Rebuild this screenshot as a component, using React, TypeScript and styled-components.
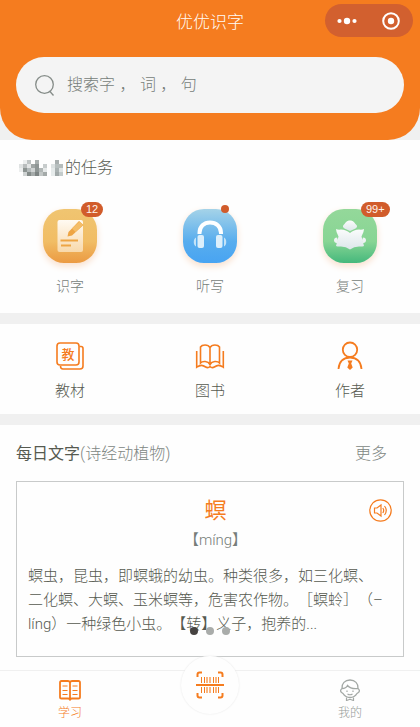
import React from "react";
import styled, { createGlobalStyle, css } from "styled-components";

const ORANGE = "#f57c1f";

const GlobalStyle = createGlobalStyle`
  * { box-sizing: border-box; }
  body {
    margin: 0;
    background: #fefefe;
    font-family: Roboto, "Noto Sans CJK SC", sans-serif;
    font-weight: 300;
    color: #565a50;
    text-spacing-trim: space-all;
  }
  button, input {
    font: inherit;
    color: inherit;
    border: 0;
    padding: 0;
    background: none;
  }
  button { cursor: pointer; }
  a { color: inherit; text-decoration: none; }
  h1, h2, p { margin: 0; font-weight: inherit; }
  svg { display: block; }
`;

const Page = styled.div`
  min-height: 100vh;
  display: flex;
  flex-direction: column;
`;

const HeaderBack = styled.div`
  background: #f0f0f0;
`;

const Header = styled.header`
  background: ${ORANGE};
  border-radius: 0 0 32px 32px;
  padding: 4px 16px 27px;
`;

const TitleBar = styled.div`
  display: grid;
  grid-template-columns: 1fr auto 1fr;
  align-items: center;
  height: 33px;
  margin-right: -9px;
  margin-left: -9px;
  margin-bottom: 20px;
`;

const Title = styled.h1`
  grid-column: 2;
  padding-top: 2px;
  font-size: 17px;
  line-height: 24px;
  color: #fffaf5;
`;

const Capsule = styled.div`
  justify-self: end;
  display: flex;
  width: 88px;
  height: 33px;
  border-radius: 17px;
  background: #d2602f;
`;

const CapsuleButton = styled.button`
  flex: 1;
  display: flex;
  align-items: center;
  justify-content: center;
`;

const SearchBox = styled.label`
  display: flex;
  align-items: center;
  gap: 11px;
  height: 56px;
  padding: 0 18px;
  border-radius: 28px;
  background: #f4f4f4;
`;

const SearchInput = styled.input`
  flex: 1;
  min-width: 0;
  font-family: "Liberation Sans", "Noto Sans CJK SC", sans-serif;
  font-size: 16px;
  line-height: 24px;
  outline: 0;
  &::placeholder { color: #767d79; opacity: 1; }
`;

const Section = styled.section<{ $divided?: boolean }>`
  background: #fefefe;
  ${(p) => p.$divided && css`border-bottom: 11px solid #f0f0f0;`}
`;

const TaskTitle = styled.h2`
  display: flex;
  align-items: center;
  gap: 1px;
  padding: 16px 18px 0;
  font-size: 16px;
  line-height: 24px;
`;

const Row = styled.div<{ $pad: string }>`
  display: grid;
  grid-template-columns: repeat(3, 1fr);
  padding: ${(p) => p.$pad};
`;

const Entry = styled.button<{ $size: number; $gap: number; $muted?: boolean }>`
  display: flex;
  flex-direction: column;
  align-items: center;
  gap: ${(p) => p.$gap}px;
  font-size: ${(p) => p.$size}px;
  line-height: 20px;
  color: ${(p) => (p.$muted ? "#767d79" : "#565a50")};
`;

const Tile = styled.span<{ $from: string; $mid: string; $to: string }>`
  position: relative;
  width: 54px;
  height: 54px;
  border-radius: 21px;
  background: linear-gradient(${(p) => `${p.$from}, ${p.$mid} 60%, ${p.$to}`});
  box-shadow: 0 3px 7px #f9dfcb;
`;

const Badge = styled.span`
  position: absolute;
  left: 38px;
  top: -7px;
  padding: 0 5px;
  border-radius: 8px;
  background: #d15c2b;
  color: #fff3ea;
  font-family: "Liberation Sans", sans-serif;
  font-size: 11px;
  line-height: 15px;
`;

const Dot = styled.span`
  position: absolute;
  left: 38px;
  top: -4px;
  width: 8px;
  height: 8px;
  border-radius: 50%;
  background: #d15c2b;
`;

const DailyHead = styled.div`
  display: flex;
  justify-content: space-between;
  padding: 17px 33px 0 16px;
  font-size: 16px;
  line-height: 24px;
`;

const DailyTitle = styled.h2`
  font-size: 16px;
  font-weight: 400;
`;

const Muted = styled.span`
  font-weight: 300;
  color: #808783;
`;

const More = styled.a`
  color: #808783;
`;

const Card = styled.article`
  position: relative;
  min-height: 176px;
  margin: 15px 16px 13px;
  padding: 14px 0 18px 11px;
  border: 1px solid #c8caca;
`;

const Character = styled.p`
  text-align: center;
  font-size: 22px;
  font-weight: 400;
  line-height: 30px;
  color: ${ORANGE};
`;

const Pinyin = styled.p`
  text-align: center;
  font-size: 15px;
  line-height: 28px;
  color: #767d79;
`;

const Meaning = styled.p`
  margin-top: 10px;
  padding-right: 18px;
  font-size: 15px;
  line-height: 24px;
`;

const SoundButton = styled.button`
  position: absolute;
  top: 17px;
  right: 11px;
`;

const Pager = styled.div`
  position: absolute;
  left: 0;
  right: 0;
  bottom: 21px;
  display: flex;
  justify-content: center;
  gap: 8px;
`;

const PageDot = styled.button<{ $on?: boolean }>`
  width: 8px;
  height: 8px;
  border-radius: 50%;
  background: ${(p) => (p.$on ? "#454240" : "#a9acaa")};
`;

const TabBar = styled.nav`
  display: grid;
  grid-template-columns: repeat(3, 1fr);
  flex: 1;
  min-height: 57px;
  border-top: 1px solid #f0f0f0;
`;

const Tab = styled.a<{ $on?: boolean }>`
  display: flex;
  flex-direction: column;
  align-items: center;
  gap: 3px;
  padding-top: 8px;
  font-size: 12px;
  line-height: 18px;
  color: ${(p) => (p.$on ? ORANGE : "#969c99")};
`;

const ScanButton = styled.button`
  position: relative;
  justify-self: center;
  display: flex;
  align-items: center;
  justify-content: center;
  width: 58px;
  height: 58px;
  margin-top: -15px;
  border-radius: 50%;
  background: #fefefe;
  box-shadow: 0 0 2px #e6e6e6;
`;

const mosaic: [number, number, string][] = [
  [0, 1, "#dfe2e2"], [1, 1, "#b9bdbd"], [2, 1, "#e3e5e5"], [1, 0, "#eceeee"], [2, 0, "#bfc4c4"], [3, 1, "#a0a6a5"],
  [0, 2, "#eceeee"], [1, 2, "#8d9492"], [2, 2, "#b4baba"], [3, 2, "#cfd3d3"], [1, 3, "#cfd3d3"], [2, 3, "#858c8a"],
  [3, 3, "#a5abaa"], [4, 0, "#a9afae"], [4, 1, "#8f9695"], [4, 2, "#8f9695"],
  [4, 3, "#7d8483"], [5, 2, "#b0b6b5"], [5, 3, "#c2c7c6"], [6, 1, "#c7cccc"], [6, 2, "#e6e9e9"],
  [6, 3, "#a4aaa9"], [8, 1, "#dce1e1"], [8, 2, "#e6ebeb"], [9, 0, "#a9afaf"], [9, 1, "#b6bebe"],
  [9, 2, "#aab2b2"], [9, 3, "#a1a9a9"], [10, 1, "#b5bcbb"], [10, 2, "#dfe4e4"], [10, 3, "#c4cccc"], [8, 3, "#e7ecec"],
];

const NameMosaic = () => (
  <svg width="46" height="17" viewBox="0 0 46 17" role="img" aria-label="用户" shapeRendering="crispEdges">
    {mosaic.map(([x, y, fill], i) => (
      <rect key={i} x={x * 4 + 1} y={y * 4} width="4" height="4" fill={fill} />
    ))}
  </svg>
);

const NoteIcon = () => (
  <svg width="54" height="54" viewBox="0 0 54 54">
    <defs>
      <linearGradient id="note" x2="0" y2="1">
        <stop stopColor="#fffaf2" />
        <stop offset="1" stopColor="#f8d9ab" />
      </linearGradient>
    </defs>
    <rect x="14.500" y="11" width="25.500" height="32" rx="2" fill="url(#note)" />
    <path d="M17.500 31.500H35M18 36.500H28" stroke="#eea544" strokeWidth="1.800" />
    <path d="M36 12l4.500 4-11.500 10.500-4.500 1 1-4.500z" fill="#eea544" />
    <path d="M36.500 12.500l3.500 3.500-7.500 7-3.500-3.500z" fill="#f4bd68" />
  </svg>
);

const HeadphoneIcon = () => (
  <svg width="54" height="54" viewBox="0 0 54 54" fill="none">
    <path d="M16.500 25v-1C16.500 17.500 21 13.500 27 13.500S38 17.500 38 24v1" stroke="#fff" strokeWidth="4" />
    <rect x="14.500" y="26" width="6.500" height="13" rx="2" fill="#dceffb" />
    <rect x="33" y="26" width="6.500" height="13" rx="2" fill="#dceffb" />
    <path d="M13 28.500c-3 1-3 8 0 9zM41 28.500c3 1 3 8 0 9z" fill="#c3e3f8" />
  </svg>
);

const ReaderIcon = () => (
  <svg width="54" height="54" viewBox="0 0 54 54">
    <defs>
      <linearGradient id="reader" x2="0" y2="1">
        <stop stopColor="#fbfcfc" />
        <stop offset="1" stopColor="#dce6ea" />
      </linearGradient>
    </defs>
    <path d="M27 11.500c3.500 0 4.500 2.500 6 4 1.500 1 1.500 3-.5 4L27 22l-5.500-2.500c-2-1-2-3-.5-4 1.500-1.500 2.500-4 6-4z" fill="url(#reader)" />
    <path d="M13 20q2 1 5 .5 5 0 9 3.500 4-3.500 9-3.500 3 .5 5-.5 0 3-2.500 7.500Q40 33 41 37q-2 .8-5 .5-5 0-9 3-4-3-9-3-3 .3-5-.5 1-4 2.500-9.500Q13 23 13 20z" fill="url(#reader)" />
    <path d="M14 28.500c-4 0-4 5.500 0 5.500l1-2.800zM40 28.500c4 0 4 5.500 0 5.500l-1-2.800z" fill="#eef3f3" />
  </svg>
);

const TextbookIcon = () => (
  <svg width="30" height="30" viewBox="0 0 30 30" fill="none" stroke={ORANGE} strokeWidth="1.600">
    <rect x="2" y="2" width="22" height="22" rx="3" />
    <path d="M24.500 5.500H26Q28 5.500 28 7.500V25q0 3-3 3H8q-2.500 0-2.500-3" />
    <text x="13" y="18" textAnchor="middle" fontSize="13" fontWeight="500" fill={ORANGE} stroke="none">教</text>
  </svg>
);

const BookIcon = () => (
  <svg width="30" height="30" viewBox="0 0 30 30" fill="none" stroke={ORANGE} strokeWidth="1.600">
    <path d="M15 6.500C13 3 7 3.500 5.500 6v16c2-2.200 7.500-2.200 9.500 1.500 2-3.700 7.500-3.700 9.500-1.500V6C23 3.500 17 3 15 6.500zM15 6.500v17" />
    <path d="M1.700 10v16.200c4-2.700 6-2.200 9-.2 1.500 1 2.500 1.200 4.300-.5 1.800 1.700 2.800 1.500 4.300.5 3-2 5-2.500 9 .2V10" />
  </svg>
);

const AuthorIcon = () => (
  <svg width="30" height="30" viewBox="0 0 30 30" fill="none" stroke={ORANGE} strokeWidth="1.800">
    <circle cx="15" cy="8.700" r="7.200" />
    <path d="M3.500 28C4 20 9 16.500 15 16.500S26 20 26.500 28" />
    <path d="M12.500 19.500h5l-1.300 3 1.500 4L15 29l-2.700-2.500 1.500-4z" fill={ORANGE} stroke="none" />
  </svg>
);

const SoundIcon = () => (
  <svg width="23" height="23" viewBox="0 0 23 23" fill="none" stroke={ORANGE} strokeWidth="1.200">
    <circle cx="11.500" cy="11.500" r="10.700" />
    <path d="M5.500 9H8l4-3v11l-4-3H5.500zM13.800 9q1.800 2.500 0 5M15.500 7q3.500 4.500 0 9" />
  </svg>
);

const StudyIcon = () => (
  <svg width="24" height="22" viewBox="0 0 24 22" fill="none" stroke={ORANGE} strokeWidth="1.800">
    <path d="M12 3.500Q11.500 2 10 2H3.500Q2 2 2 3.500V18.500Q2 19.500 3.500 19.500H10q1.500 0 2 1 .5-1 2-1h6.500q1.500 0 1.500-1V3.500Q22 2 20.500 2H14Q12.500 2 12 3.500zM12 3.500v17" />
    <path d="M4.500 7h5M4.500 11.500h5M4.500 15.500h5M14.500 7h5M14.500 11.500h5M14.500 15.500h5" strokeWidth="1.200" />
  </svg>
);

const ScanIcon = () => (
  <svg width="28" height="28" viewBox="0 0 28 28" fill="none" stroke={ORANGE}>
    <path d="M1.500 6V3.500q0-2 2-2H6M22 1.500h2.500q2 0 2 2V6M26.500 22v2.500q0 2-2 2H22M6 26.500H3.500q-2 0-2-2V22" strokeWidth="2" />
    <path d="M5.500 6v16M8.500 6v16M17.500 6v16M22.500 6v16" strokeWidth="1" />
    <path d="M11 6v16M14 6v16M20 6v16" strokeWidth="1.500" strokeOpacity=".75" />
    <path d="M0 14H28" stroke="#fefefe" strokeWidth="4" />
    <path d="M0 14H28" strokeWidth="2" />
  </svg>
);

const MeIcon = () => (
  <svg width="22" height="22" viewBox="0 0 22 22" fill="none" stroke="#a3a8a5" strokeWidth="1.300">
    <path d="M3 9.500C2.500 4.500 6 1 11 1s8.500 3.500 8 8.500q2.500 2 .5 4-1 .5-1.500 1Q15.500 18.500 11 18.500T4 14.500q-.5-.5-1.500-1-2-2 .5-4zM3 9.500Q7 9.500 8.500 6.500 12 10.500 19 9.500" />
    <path d="M8 11.500v1.500M14 11.500v1.500M8.500 15q2.500 1.500 5 0M7.500 18.500v3l3.500-1.200 3.500 1.200v-3" strokeWidth="1.200" />
  </svg>
);

export default function App() {
  return (
    <Page>
      <GlobalStyle />
      <HeaderBack>
        <Header>
          <TitleBar>
            <Title>优优识字</Title>
            <Capsule>
              <CapsuleButton aria-label="菜单">
                <svg width="20" height="8" viewBox="0 0 20 8" fill="#fff">
                  <circle cx="2.500" cy="4" r="2.100" />
                  <circle cx="10" cy="4" r="3.200" />
                  <circle cx="17.500" cy="4" r="2.100" />
                </svg>
              </CapsuleButton>
              <CapsuleButton aria-label="关闭">
                <svg width="18" height="18" viewBox="0 0 18 18">
                  <circle cx="9" cy="9" r="7.800" fill="none" stroke="#fff" strokeWidth="2" />
                  <circle cx="9" cy="9" r="3.200" fill="#fff" />
                </svg>
              </CapsuleButton>
            </Capsule>
          </TitleBar>
          <SearchBox>
            <svg width="22" height="22" viewBox="0 0 22 22" fill="none" stroke="#858c88" strokeWidth="1.300">
              <circle cx="10.500" cy="10.500" r="8.800" />
              <path d="M15.500 17L19.500 21.500" />
            </svg>
            <SearchInput aria-label="搜索" placeholder="搜索字 ， 词 ， 句" />
          </SearchBox>
        </Header>
      </HeaderBack>

      <Section $divided>
        <TaskTitle><NameMosaic />的任务</TaskTitle>
        <Row $pad="29px 0 17px">
          <Entry $size={14} $gap={13} $muted>
            <Tile $from="#f0c571" $mid="#f1bd65" $to="#eb9a42"><NoteIcon /><Badge>12</Badge></Tile>
            识字
          </Entry>
          <Entry $size={14} $gap={13} $muted>
            <Tile $from="#a5d3e8" $mid="#58adee" $to="#48a4f2"><HeadphoneIcon /><Dot /></Tile>
            听写
          </Entry>
          <Entry $size={14} $gap={13} $muted>
            <Tile $from="#94d89a" $mid="#88d594" $to="#45b87c"><ReaderIcon /><Badge>99+</Badge></Tile>
            复习
          </Entry>
        </Row>
      </Section>

      <Section $divided>
        <Row $pad="17px 0 13px">
          <Entry $size={15} $gap={10}><TextbookIcon />教材</Entry>
          <Entry $size={15} $gap={10}><BookIcon />图书</Entry>
          <Entry $size={15} $gap={10}><AuthorIcon />作者</Entry>
        </Row>
      </Section>

      <Section>
        <DailyHead>
          <DailyTitle>每日文字<Muted>(诗经动植物)</Muted></DailyTitle>
          <More href="#more">更多</More>
        </DailyHead>
        <Card>
          <Character>螟</Character>
          <Pinyin>【míng】</Pinyin>
          <Meaning>
            螟虫，昆虫，即螟蛾的幼虫。种类很多，如三化螟、二化螟、大螟、玉米螟等，危害农作物。［螟蛉］（–líng）一种绿色小虫。【转】义子，抱养的...
          </Meaning>
          <SoundButton aria-label="朗读"><SoundIcon /></SoundButton>
          <Pager>
            <PageDot $on aria-label="第1页" />
            <PageDot aria-label="第2页" />
            <PageDot aria-label="第3页" />
          </Pager>
        </Card>
      </Section>

      <TabBar>
        <Tab href="#study" $on><StudyIcon />学习</Tab>
        <ScanButton aria-label="扫一扫"><ScanIcon /></ScanButton>
        <Tab href="#me"><MeIcon />我的</Tab>
      </TabBar>
    </Page>
  );
}
